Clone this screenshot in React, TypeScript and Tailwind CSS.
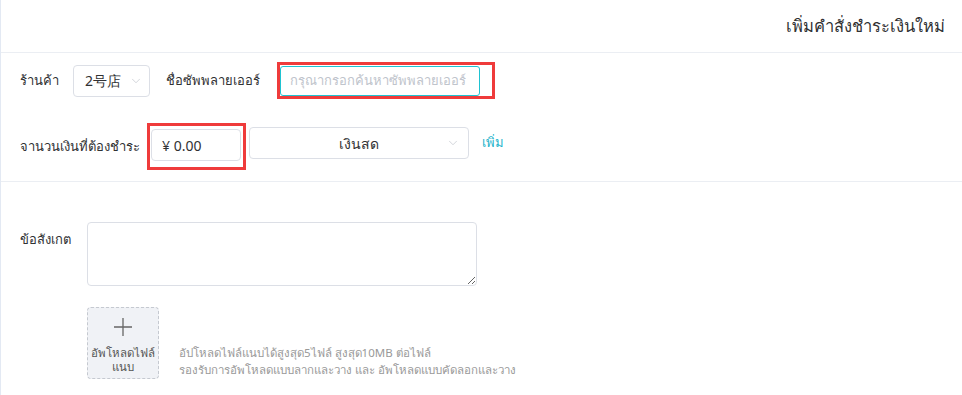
import { ChevronDown } from "lucide-react";

const font = { fontFamily: '"Noto Sans", "DejaVu Sans", sans-serif' };

export default function App() {
  return (
    <div
      className="w-[962px] h-[395px] overflow-hidden bg-white border-l border-[#e3e9f3] text-[#303133] text-[13px]"
      style={font}
    >
      {/* header */}
      <div className="h-[53px] border-b border-[#ebeef3] flex items-center justify-end pr-[17px]">
        <h1 className="text-[16.5px] font-medium">เพิ่มคำสั่งชำระเงินใหม่</h1>
      </div>

      {/* top fields */}
      <div className="px-[19px] pt-[9px] pb-[11px] border-b border-[#ebeef3]">
        <div className="flex items-center h-[37px]">
          <span className="w-[53px] whitespace-nowrap">ร้านค้า</span>
          <div className="w-[77px] h-[32px] border border-[#dcdfe6] rounded-[4px] flex items-center pl-[11px] pr-[6px] justify-between">
            <span className="text-[14px]">2号店</span>
            <ChevronDown className="w-[14px] h-[14px] text-[#c0c4cc]" strokeWidth={1.2} />
          </div>
          <span className="ml-[16px] w-[111px] whitespace-nowrap">ชื่อซัพพลายเออร์</span>
          <div className="border-[3px] border-[#ef3b3b] h-[37px] w-[218px] pt-[1px]">
            <div className="w-[200px] h-[30px] border border-[#1fc3d2] rounded-[3px] flex items-center px-[9px]">
              <span className="text-[#c0c4cc] whitespace-nowrap overflow-hidden text-[13px]">กรุณากรอกค้นหาซัพพลายเออร์</span>
            </div>
          </div>
        </div>

        <div className="flex items-center h-[47px] mt-[24px]">
          <span className="w-[127px] whitespace-nowrap">จานวนเงินที่ต้องชำระ</span>
          <div className="border-[3px] border-[#ef3b3b] w-[99px] h-[47px] pl-[1px] pt-[3px]">
            <div className="w-[90px] h-[32px] border border-[#dcdfe6] rounded-[4px] flex items-center px-[10px]">
              <span className="text-[14px]">¥ 0.00</span>
            </div>
          </div>
          <div className="ml-[3px] -mt-[7px] w-[220px] h-[32px] border border-[#dcdfe6] rounded-[4px] flex items-center relative">
            <span className="flex-1 text-center text-[14px]">เงินสด</span>
            <ChevronDown className="absolute right-[8px] w-[14px] h-[14px] text-[#c0c4cc]" strokeWidth={1.2} />
          </div>
          <span className="ml-[13px] -mt-[7px] text-[#1ab3cb]">เพิ่ม</span>
        </div>
      </div>

      {/* remark */}
      <div className="px-[19px] pt-[40px]">
        <div className="flex">
          <span className="w-[67px] pt-[8px]">ข้อสังเกต</span>
          <textarea className="w-[390px] h-[64px] border border-[#dcdfe6] rounded-[4px] outline-none resize-y" />
        </div>

        <div className="flex items-end mt-[21px] ml-[67px]">
          <div className="w-[72px] h-[72px] bg-[#f0f2f6] border border-dashed border-[#c5c9d0] rounded-[4px] flex flex-col items-center pt-[9px]">
            <svg width="20" height="20" viewBox="0 0 20 20" className="text-[#666]">
              <path d="M10 1v18M1 10h18" stroke="currentColor" strokeWidth="1.3" />
            </svg>
            <span className="text-[11.5px] leading-[14px] text-center text-[#555] mt-[9px] whitespace-nowrap">
              อัพโหลดไฟล์
              <br />
              แนบ
            </span>
          </div>
          <div className="ml-[20px] mb-[1px] text-[11.5px] leading-[17px] text-[#999] whitespace-nowrap">
            <p>อัปโหลดไฟล์แนบได้สูงสุด5ไฟล์ สูงสุด10MB ต่อไฟล์</p>
            <p>รองรับการอัพโหลดแบบลากและวาง และ อัพโหลดแบบคัดลอกและวาง</p>
          </div>
        </div>
      </div>
    </div>
  );
}
